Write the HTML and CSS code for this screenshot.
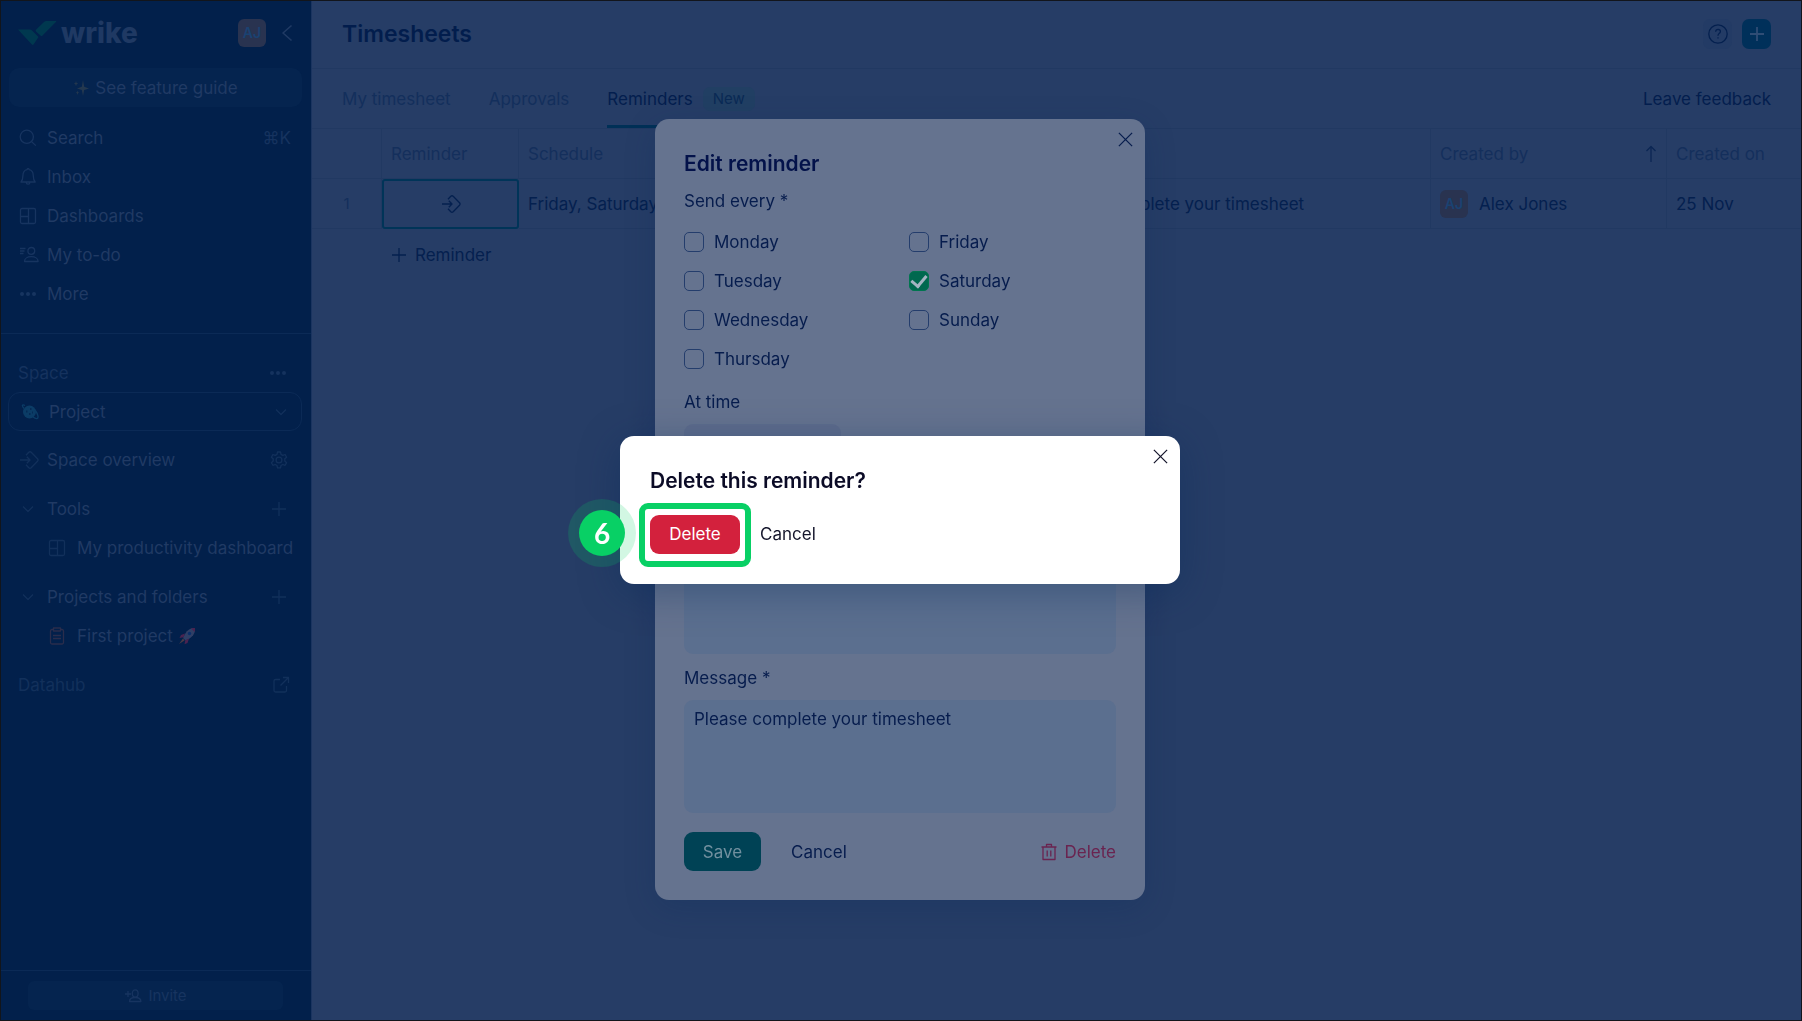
FILE: index.html
```html
<!DOCTYPE html>
<html lang="en">
<head>
<meta charset="utf-8">
<meta name="viewport" content="width=device-width, initial-scale=1">
<title>Timesheets</title>
<link rel="stylesheet" href="styles.css">
</head>
<body>
<svg class="sprite" aria-hidden="true">
  <symbol id="search" viewBox="0 0 18 18"><circle cx="7.8" cy="7.8" r="6.6"/><path d="M12.6 12.6l4.2 4"/></symbol>
  <symbol id="bell" viewBox="0 0 18 18"><path d="M2 14h14.2c-1.6-1.6-1.9-3-1.9-6.2 0-3.6-2-5.8-4.2-6.2-.2-1.4-1.8-1.4-2 0C5.900 2 3.900 4.200 3.900 7.800 3.900 11 3.600 12.400 2 14zM7.200 14.200c.1 2.600 3.700 2.600 3.800 0"/></symbol>
  <symbol id="board" viewBox="0 0 18 18"><rect x="1.500" y="1.500" width="15" height="15" rx="1.500"/><path d="M9.500 1.500v15M1.500 9.500h8"/></symbol>
  <symbol id="todo" viewBox="0 0 20 18"><path d="M1 2.500h5.500M1 5h4.500M1 7.500h3.500M5.500 15.500c0-3 3-4.800 6.800-4.800s6.800 1.800 6.800 4.800z"/><circle cx="12.300" cy="4.900" r="3.400"/></symbol>
  <symbol id="dots" viewBox="0 0 18 18"><g fill="currentColor" stroke="none"><circle cx="3" cy="9" r="2"/><circle cx="9" cy="9" r="2"/><circle cx="15" cy="9" r="2"/></g></symbol>
  <symbol id="down" viewBox="0 0 18 18"><path d="M4 6.500l5 5 5-5"/></symbol>
  <symbol id="enter" viewBox="0 0 20 18"><path d="M1 9h9.500M7.800 5.800L11 9l-3.200 3.200M7 4.200l2.800-2.900q1.200-1.100 2.400 0l6.300 6.500q1.100 1.200 0 2.400l-6.300 6.500q-1.200 1.100-2.400 0L7 13.800"/></symbol>
  <symbol id="gear" viewBox="0 0 18 18"><path d="M7.500 1h3l.5 2.400 1.800 1 2.300-.9 1.500 2.700-1.800 1.600v2.200l1.800 1.700-1.500 2.600-2.300-.8-1.800 1-.5 2.400h-3L7 14.500l-1.800-1-2.300.8-1.500-2.600L3.200 10V7.800L1.400 6.200l1.500-2.700 2.300.9 1.800-1z"/><circle cx="9" cy="9" r="2.900"/></symbol>
  <symbol id="plus" viewBox="0 0 18 18"><path d="M9 2v14M2 9h14"/></symbol>
  <symbol id="clipboard" viewBox="0 0 18 18"><path d="M5.500 2.500H4A1.500 1.500 0 0 0 2.500 4v11.500A1.500 1.500 0 0 0 4 17h10a1.500 1.500 0 0 0 1.500-1.500V4A1.500 1.500 0 0 0 14 2.500h-1.500M5.500 1h7v3h-7zM5 8.500h8M5 11.500h8"/></symbol>
  <symbol id="external" viewBox="0 0 18 18"><path d="M8 3.500H3.500A1.500 1.500 0 0 0 2 5v9.500A1.500 1.500 0 0 0 3.500 16H13a1.500 1.500 0 0 0 1.500-1.500V10M11 1.500h5.500V7M16.500 1.500l-8 8"/></symbol>
  <symbol id="close" viewBox="0 0 18 18"><path d="M2 2l14 14M16 2L2 16"/></symbol>
  <symbol id="invite" viewBox="0 0 18 16"><path d="M1 6h6M4 3v6M5.500 13.500c0-2.500 2.600-4 5.700-4s5.700 1.500 5.700 4z"/><ellipse cx="11.200" cy="5.500" rx="2.900" ry="3.600"/></symbol>
  <symbol id="trash" viewBox="0 0 18 18"><path d="M1.500 4h15M3 4v12.500h12V4M6.500 4V1.500h5V4M7.200 7.500v6M10.800 7.500v6"/></symbol>
</svg>

<div class="app">
  <aside class="sidebar">
    <header class="brand">
      <svg class="brand-mark" viewBox="0 0 40 26" aria-hidden="true"><path d="M1 9.500h11.500q1.500 0 2.500 1l6.500 6.500-5 7.500q-.8.800-1.600 0zM27 2q1-1 2.500-1H39q.6.100.1.800L25.500 15.400q-1 1-2 0L19 11.500q-.8-1 .2-2z"/></svg>
      <span class="brand-name">wrike</span>
      <span class="avatar">AJ</span>
      <button class="icon-btn collapse" aria-label="Collapse"><svg viewBox="0 0 12 18"><path d="M10.500 1.500L2 9l8.500 7.500"/></svg></button>
    </header>
    <button class="guide"><svg class="sparkles" viewBox="0 0 16 16" aria-hidden="true"><path d="M10 0l1.200 6.800L16 8.500l-4.800 1.500L10 16l-1.200-6L4 8.500l4.800-1.700zM3 1l.6 2 1.600.6-1.600.6L3 6.300l-.6-2.100L.8 3.600 2.400 3zM4.500 10.500l.5 1.700 1.400.5-1.400.5-.5 1.800-.5-1.800-1.400-.5 1.400-.5z"/></svg>See feature guide</button>
    <nav class="nav">
      <a class="item" href="#"><svg class="ico"><use href="#search"/></svg>Search<span class="key">⌘K</span></a>
      <a class="item" href="#"><svg class="ico"><use href="#bell"/></svg>Inbox</a>
      <a class="item" href="#"><svg class="ico"><use href="#board"/></svg>Dashboards</a>
      <a class="item" href="#"><svg class="ico ico-wide"><use href="#todo"/></svg>My to-do</a>
      <a class="item" href="#"><svg class="ico"><use href="#dots"/></svg>More</a>
    </nav>
    <section class="space">
      <div class="space-head"><label for="space">Space</label><button class="icon-btn" aria-label="Space options"><svg class="ico"><use href="#dots"/></svg></button></div>
      <div class="space-pick">
        <svg class="planet" viewBox="0 0 18 18" aria-hidden="true"><circle cx="8.500" cy="9" r="6.500"/><path class="orbit" d="M3 5.500C.5 2.500 1 1 4 2.500M14 7c3 4 4 8 2 8.500-1 .3-2.500-.4-4-1.500"/><path class="craters" d="M5 8.500h1.500M9 6h1.500M8 11h1.500M11 9.500h1"/></svg>
        <select id="space"><option>Project</option></select>
        <svg class="ico"><use href="#down"/></svg>
      </div>
      <div class="item"><a class="link" href="#"><svg class="ico ico-wide"><use href="#enter"/></svg>Space overview</a><button class="icon-btn" aria-label="Space settings"><svg class="ico"><use href="#gear"/></svg></button></div>
      <div class="item group"><a class="link" href="#"><svg class="ico"><use href="#down"/></svg>Tools</a><button class="icon-btn" aria-label="Add tool"><svg class="ico"><use href="#plus"/></svg></button></div>
      <a class="item child" href="#"><svg class="ico"><use href="#board"/></svg>My productivity dashboard</a>
      <div class="item group"><a class="link" href="#"><svg class="ico"><use href="#down"/></svg>Projects and folders</a><button class="icon-btn" aria-label="Add project"><svg class="ico"><use href="#plus"/></svg></button></div>
      <a class="item child" href="#"><svg class="ico ico-project"><use href="#clipboard"/></svg>First project
        <svg class="rocket" viewBox="0 0 18 18" aria-hidden="true"><path fill="#2f3f66" d="M17 1c-4-.3-7.500 1.500-10 6l-2 4 2.500 2.500 4-2C15.500 9 17.500 5 17 1z"/><path fill="#4a2350" d="M7 6.500L3 8 1.500 11l4-.8zM11 11.500L9.500 16l-3 1.300.8-4zM13 1.500q2-.7 4-.5.200 2-.4 4z"/><circle cx="11.500" cy="6.500" r="1.700" fill="#0b2f6a"/><path fill="#4b3c46" d="M5 11.500L1 17l5.500-3.500z"/></svg>
      </a>
      <a class="item group datahub" href="#">Datahub<svg class="ico"><use href="#external"/></svg></a>
    </section>
    <footer class="side-foot"><button class="invite"><svg class="ico"><use href="#invite"/></svg>Invite</button></footer>
  </aside>

  <main class="main">
    <header class="topbar">
      <h1>Timesheets</h1>
      <button class="square" aria-label="Help"><svg viewBox="0 0 20 20"><circle cx="10" cy="10" r="9.200"/><path d="M7.600 7.800q.2-2.400 2.500-2.400 2.300.1 2.300 2.100 0 1.200-1.300 2-1.100.7-1.100 2.200M10 13.300v1.300"/></svg></button>
      <button class="square square-add" aria-label="Add"><svg viewBox="0 0 20 20"><path d="M10 3v14M3 10h14"/></svg></button>
    </header>
    <nav class="tabs">
      <a class="tab" href="#">My timesheet</a>
      <a class="tab" href="#">Approvals</a>
      <a class="tab tab-on" href="#">Reminders<span class="new">New</span></a>
      <a class="feedback" href="#">Leave feedback</a>
    </nav>
    <table class="grid">
      <colgroup><col class="c-num"><col class="c-rem"><col class="c-sch"><col><col class="c-by"><col class="c-on"></colgroup>
      <thead><tr><th></th><th>Reminder</th><th class="open">Schedule</th><th>Message</th>
        <th><span class="sorted">Created by<svg viewBox="0 0 12 18"><path d="M6 17V1.500M1.500 6L6 1.500 10.500 6"/></svg></span></th><th class="open">Created on</th></tr></thead>
      <tbody><tr><td class="num">1</td><td class="picked"><a href="#" aria-label="Open reminder"><svg class="ico ico-wide"><use href="#enter"/></svg></a></td><td class="open">Friday, Saturday</td><td>Please complete your timesheet</td>
        <td><span class="person"><span class="avatar">AJ</span>Alex Jones</span></td><td class="open">25 Nov</td></tr></tbody>
    </table>
    <button class="add-row"><svg class="ico"><use href="#plus"/></svg>Reminder</button>
  </main>
</div>

<div class="layer">
  <form class="modal" role="dialog" aria-labelledby="edit-title">
    <button type="button" class="icon-btn close" aria-label="Close"><svg><use href="#close"/></svg></button>
    <h2 id="edit-title">Edit reminder</h2>
    <fieldset class="days">
      <legend>Send every *</legend>
      <label><input type="checkbox">Monday</label>
      <label><input type="checkbox">Tuesday</label>
      <label><input type="checkbox">Wednesday</label>
      <label><input type="checkbox">Thursday</label>
      <label><input type="checkbox">Friday</label>
      <label><input type="checkbox" checked>Saturday</label>
      <label><input type="checkbox">Sunday</label>
    </fieldset>
    <label class="caption" for="time">At time</label>
    <input class="field time" id="time" type="text">
    <textarea class="field area recipients" aria-label="Recipients"></textarea>
    <label class="caption" for="message">Message *</label>
    <textarea class="field area" id="message">Please complete your timesheet</textarea>
    <div class="actions">
      <button type="button" class="btn save">Save</button>
      <button type="button" class="btn plain">Cancel</button>
      <button type="button" class="btn remove"><svg class="ico"><use href="#trash"/></svg>Delete</button>
    </div>
  </form>
</div>

<div class="layer">
  <section class="modal confirm" role="alertdialog" aria-labelledby="confirm-title">
    <button class="icon-btn close" aria-label="Close"><svg><use href="#close"/></svg></button>
    <h2 id="confirm-title">Delete this reminder?</h2>
    <div class="confirm-actions">
      <div class="callout">
        <button class="btn danger">Delete</button>
        <span class="ring"></span>
        <span class="step">6</span>
      </div>
      <button class="btn dismiss">Cancel</button>
    </div>
  </section>
</div>
</body>
</html>
```
FILE: styles.css
```css
* { box-sizing: border-box; }

:root {
  --side: #02204b;
  --side-text: #203a64;
  --side-dim: #12305b;
  --side-line: #0b2a56;
  --main: #263d66;
  --main-text: #04204f;
  --main-dim: #132f5c;
  --line: #213962;
  --teal: #003057;
  --panel: #65738f;
  --panel-text: #061c4d;
  --field: #5b6f8f;
  --green: #08d065;
}

body {
  margin: 0;
  border: 1px solid #12151b;
  background: var(--side);
  font: 17px/24px Inter, "Noto Sans", sans-serif;
  color: var(--main-text);
}

a { color: inherit; text-decoration: none; }
button, select, input, textarea { font: inherit; color: inherit; }
button { border: 0; padding: 0; background: none; }
svg { display: block; flex: none; fill: none; stroke: currentColor; stroke-width: 1.3; stroke-linejoin: round; }
h1, h2 { margin: 0; font-weight: 600; }

.sprite { position: absolute; width: 0; height: 0; }
.ico { width: 18px; height: 18px; }
.ico-wide { width: 20px; margin-right: -2px; }
.icon-btn { display: flex; }

.app { display: flex; min-height: calc(100vh - 2px); }

/* Sidebar */
.sidebar {
  flex: none;
  display: flex;
  flex-direction: column;
  width: 311px;
  border-right: 1px solid #1a3460;
  background: var(--side);
  color: var(--side-text);
}
.brand { display: flex; align-items: center; height: 67px; padding: 0 18px 3px 16px; }
.brand-mark { width: 40px; height: 26px; fill: #00384f; stroke: none; }
.brand-name { flex: 1; margin-left: 4px; font-size: 28px; line-height: 32px; font-weight: 800; color: #1f3963; }
.avatar {
  display: grid;
  place-items: center;
  width: 28px;
  height: 28px;
  border-radius: 6px;
  background: #293350;
  color: #1a4272;
  font-size: 14px;
  font-weight: 600;
}
.collapse { margin-left: 15px; }
.collapse svg { width: 12px; height: 18px; stroke-width: 1.6; }
.guide {
  display: flex;
  align-items: center;
  justify-content: center;
  gap: 6px;
  height: 39px;
  margin: 0 9px 11px 8px;
  border-radius: 10px;
  background: #05244f;
}
.sparkles { width: 16px; height: 16px; fill: #24384f; stroke: none; }
.nav { padding-bottom: 20px; border-bottom: 1px solid var(--side-line); }
.item { display: flex; align-items: center; gap: 10px; height: 39px; padding: 0 20px 0 18px; }
.item .ico { color: var(--side-dim); }
.item .icon-btn { margin-right: 3px; }
.nav .ico { color: #173460; }
.key { margin-left: auto; color: #16335f; }
.link { flex: 1; display: flex; align-items: center; gap: 10px; }
.group { margin-top: 10px; }
.child { gap: 11px; padding-left: 47px; padding-right: 0; white-space: nowrap; }
.space-head { display: flex; align-items: center; justify-content: space-between; height: 38px; margin-top: 20px; padding: 0 24px 0 17px; color: #15325e; }
.space-pick {
  display: flex;
  align-items: center;
  height: 39px;
  margin: 0 9px 9px 7px;
  padding: 0 11px 0 12px;
  border: 1px solid var(--side-line);
  border-radius: 12px;
}
.space-pick select { flex: 1; margin-left: 10px; padding: 0; border: 0; appearance: none; background: none; }
.space-pick .ico { color: var(--side-dim); }
.planet { width: 18px; height: 18px; fill: #0b3c66; stroke: none; }
.planet .orbit { fill: none; stroke: #0b3c66; }
.planet .craters { stroke: #052a55; stroke-width: 2; }
.item .ico-project { color: #2a2d4c; }
.rocket { width: 18px; height: 18px; margin-left: -6px; stroke: none; }
.datahub { justify-content: space-between; padding-left: 17px; padding-right: 21px; color: #12305b; }
.side-foot { margin-top: auto; padding: 10px 28px 10px 27px; border-top: 1px solid var(--side-line); }
.invite {
  display: flex;
  align-items: center;
  justify-content: center;
  gap: 6px;
  width: 100%;
  height: 29px;
  border-radius: 6px;
  background: #05244f;
  font-size: 15px;
  color: #173460;
}

/* Page */
.main { flex: 1; min-width: 0; background: var(--main); }
.topbar { display: flex; align-items: center; gap: 10px; height: 68px; padding: 0 30px 1px; border-bottom: 1px solid var(--line); }
h1 { flex: 1; font-size: 23px; line-height: 32px; color: #021d4d; }
.square { display: grid; place-items: center; width: 29px; height: 30px; border-radius: 7px; background: #233b65; }
.square svg { width: 20px; height: 20px; }
.square-add { background: #00305a; color: #2f4d75; }
.square-add svg { stroke-width: 1.8; }
.tabs { display: flex; gap: 38px; height: 60px; padding: 0 30px; border-bottom: 1px solid var(--line); }
.tab { display: flex; align-items: center; color: var(--main-dim); }
.tab-on { border-bottom: 3px solid var(--teal); padding-top: 3px; color: #031e4e; }
.new { margin-left: 10px; padding: 0 10px; border-radius: 7px; background: #213f63; font-size: 15px; color: #0a2a55; }
.feedback { margin-left: auto; align-self: center; color: #031e4e; }

.grid { width: 100%; table-layout: fixed; border-collapse: separate; border-spacing: 0; }
.c-num { width: 70px; }
.c-rem { width: 137px; }
.c-sch { width: 519px; }
.c-by { width: 236px; }
.c-on { width: 134px; }
.grid th, .grid td { height: 50px; padding: 0 9px; border-right: 1px solid var(--line); border-bottom: 1px solid var(--line); text-align: left; font-weight: 400; white-space: nowrap; }
.grid th { color: #142f5c; }
.grid .open { border-right-color: transparent; }
.grid .num { text-align: center; font-size: 15px; color: #132f5c; }
.grid .picked { border: 2px solid #003458; border-radius: 3px; }
.picked svg { margin: auto; }
.sorted { display: flex; justify-content: space-between; align-items: center; }
.sorted svg { width: 12px; height: 18px; color: #0b2654; }
.person { display: flex; align-items: center; gap: 11px; }
.add-row { display: flex; align-items: center; gap: 7px; height: 52px; margin-left: 78px; }

/* Dialogs */
.layer { position: fixed; inset: 0 2px 2px 0; display: grid; place-items: center; pointer-events: none; }
.modal {
  position: relative;
  width: 490px;
  padding: 30px 29px 29px;
  border-radius: 14px;
  background: var(--panel);
  color: var(--panel-text);
  box-shadow: 0 8px 32px rgba(0, 40, 90, .2);
  pointer-events: auto;
}
.close { position: absolute; top: 12px; right: 11px; }
.close svg { width: 17px; height: 17px; }
h2 { font-size: 21px; line-height: 30px; color: #03124a; }
.days {
  display: grid;
  grid-template-rows: repeat(4, 39px);
  grid-auto-flow: column;
  grid-auto-columns: 1fr;
  column-gap: 18px;
  margin: 0;
  padding: 0;
  border: 0;
}
.days legend { height: 43px; padding: 10px 0 0; }
.days label { display: flex; align-items: center; gap: 10px; }
.days input {
  appearance: none;
  display: grid;
  place-items: center;
  width: 20px;
  height: 20px;
  margin: 0;
  border: 1px solid #243d6c;
  border-radius: 5px;
}
.days input:checked { border-color: #00754f; background: #00684f; }
.days input:checked::before {
  content: "";
  width: 7px;
  height: 12px;
  margin-bottom: 3px;
  border: solid #a3b4c2;
  border-width: 0 3px 3px 0;
  transform: rotate(40deg);
}
.caption { display: block; margin: 12px 0 10px; }
.field { display: block; width: 100%; border: 0; border-radius: 9px; background: var(--field); }
.time { width: 157px; height: 39px; background: #5e6c8c; }
.area { height: 113px; padding: 7px 10px; resize: none; }
.recipients { margin-top: 78px; }
.actions { display: flex; align-items: center; margin-top: 19px; }
.btn { height: 39px; border-radius: 9px; }
.save { width: 77px; background: #004255; color: #71909f; }
.plain { margin-left: 30px; }
.remove { display: flex; align-items: center; gap: 6px; margin-left: auto; color: #6a2450; }

.confirm { width: 560px; padding: 30px; background: #fff; color: #14152b; box-shadow: 0 8px 40px rgba(0, 40, 90, .35); }
.confirm h2 { color: #0b0b26; }
.confirm-actions { display: flex; gap: 20px; margin-top: 19px; }
.callout { position: relative; }
.danger { display: block; width: 90px; background: #d3213d; color: #fff; }
.ring { position: absolute; inset: -12px -11px -13px; border: 6px solid var(--green); border-radius: 9px; }
.step {
  position: absolute;
  top: -5px;
  left: -71px;
  display: grid;
  place-items: center;
  width: 46px;
  height: 46px;
  border-radius: 50%;
  background: var(--green);
  box-shadow: 0 0 0 11px rgba(8, 208, 101, .18);
  color: #fff;
  font-family: Lato, sans-serif;
  font-size: 28px;
  font-weight: 700;
}
```
